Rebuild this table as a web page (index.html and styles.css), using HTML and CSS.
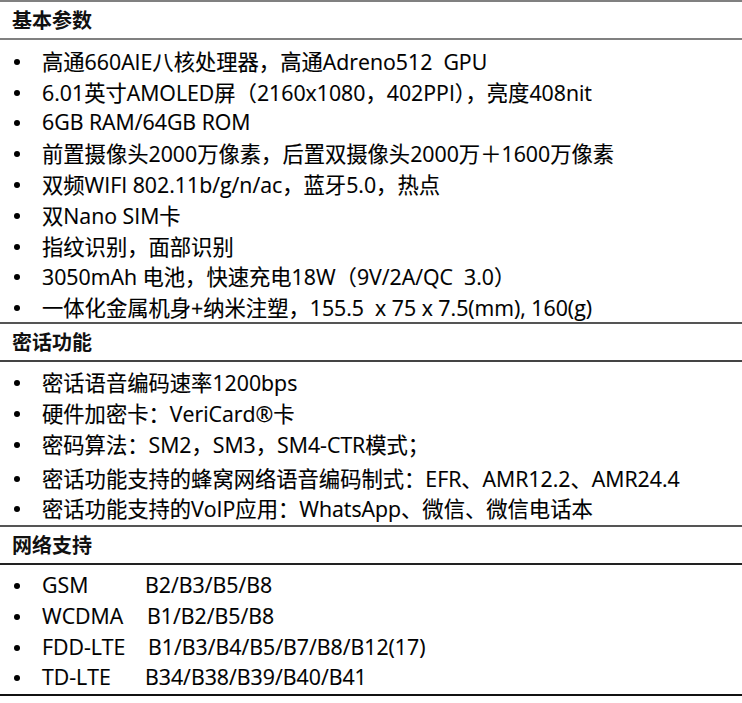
FILE: index.html
```html
<!DOCTYPE html>
<html lang="zh-CN">
<head>
<meta charset="utf-8">
<title>规格参数</title>
<link rel="stylesheet" href="styles.css">
</head>
<body>
<div class="spec">
  <section class="group basic">
    <h2 class="head">基本参数</h2>
    <ul class="items">
      <li>高通660AIE八核处理器，高通Adreno512&nbsp; GPU</li>
      <li>6.01英寸AMOLED屏（2160x1080，402PPI），亮度408nit</li>
      <li>6GB RAM/64GB ROM</li>
      <li>前置摄像头2000万像素，后置双摄像头2000万＋1600万像素</li>
      <li>双频WIFI 802.11b/g/n/ac，蓝牙5.0，热点</li>
      <li>双Nano SIM卡</li>
      <li>指纹识别，面部识别</li>
      <li>3050mAh 电池，快速充电18W（9V/2A/QC&nbsp; 3.0）</li>
      <li>一体化金属机身+纳米注塑，155.5&nbsp; x 75 x 7.5(mm), 160(g)</li>
    </ul>
  </section>
  <section class="group secure">
    <h2 class="head">密话功能</h2>
    <ul class="items">
      <li>密话语音编码速率1200bps</li>
      <li>硬件加密卡：VeriCard®卡</li>
      <li>密码算法：SM2，SM3，SM4-CTR模式；</li>
      <li class="tall">密话功能支持的蜂窝网络语音编码制式：EFR、AMR12.2、AMR24.4</li>
      <li>密话功能支持的VoIP应用：WhatsApp、微信、微信电话本</li>
    </ul>
  </section>
  <section class="group network">
    <h2 class="head">网络支持</h2>
    <ul class="items">
      <li><span class="net">GSM</span><span class="band">B2/B3/B5/B8</span></li>
      <li><span class="net">WCDMA</span><span class="band shift">B1/B2/B5/B8</span></li>
      <li><span class="net">FDD-LTE</span><span class="band shift2">B1/B3/B4/B5/B7/B8/B12(17)</span></li>
      <li><span class="net">TD-LTE</span><span class="band">B34/B38/B39/B40/B41</span></li>
    </ul>
  </section>
</div>
</body>
</html>
```

FILE: styles.css
```css
html, body {
  margin: 0;
  padding: 0;
  background: #ffffff;
}

body {
  font-family: "Open Sans", "Noto Sans CJK SC", sans-serif;
  color: #000000;
  width: 742px;
}

.spec {
  border-top: 2px solid #808080;
}

.head {
  margin: 0;
  height: 36px;
  line-height: 36px;
  padding-left: 12px;
  font-family: "Noto Sans CJK SC", sans-serif;
  font-size: 20px;
  font-weight: 700;
  color: #111111;
}

.basic .head {
  border-bottom: 2px solid #808080;
}

.secure .head {
  border-bottom: 2px solid #444444;
}

.network .head {
  border-bottom: 2px solid #222222;
}

.items {
  list-style: none;
  margin: 0;
  padding: 5px 0 0;
  font-size: 21.3px;
  -webkit-text-stroke: 0.15px #000000;
}

.basic .items {
  border-bottom: 2px solid #555555;
}

.secure .items {
  padding-top: 4px;
  height: 165px;
  box-sizing: border-box;
  border-bottom: 2px solid #555555;
}

.network .items {
  padding-top: 4px;
  height: 131px;
  box-sizing: border-box;
  border-bottom: 2px solid #111111;
}

.items li {
  display: flex;
  align-items: center;
  height: 30.8px;
  white-space: nowrap;
}

.items li::before {
  content: "";
  flex: 0 0 auto;
  width: 6px;
  height: 6px;
  border-radius: 50%;
  background: #000000;
  margin: 3px 22px 0 14px;
}

.items li.tall {
  height: 34px;
  padding-top: 3px;
  box-sizing: border-box;
}

.net {
  display: inline-block;
  width: 103px;
}

.band.shift {
  padding-left: 2px;
}

.band.shift2 {
  padding-left: 3px;
}
```
